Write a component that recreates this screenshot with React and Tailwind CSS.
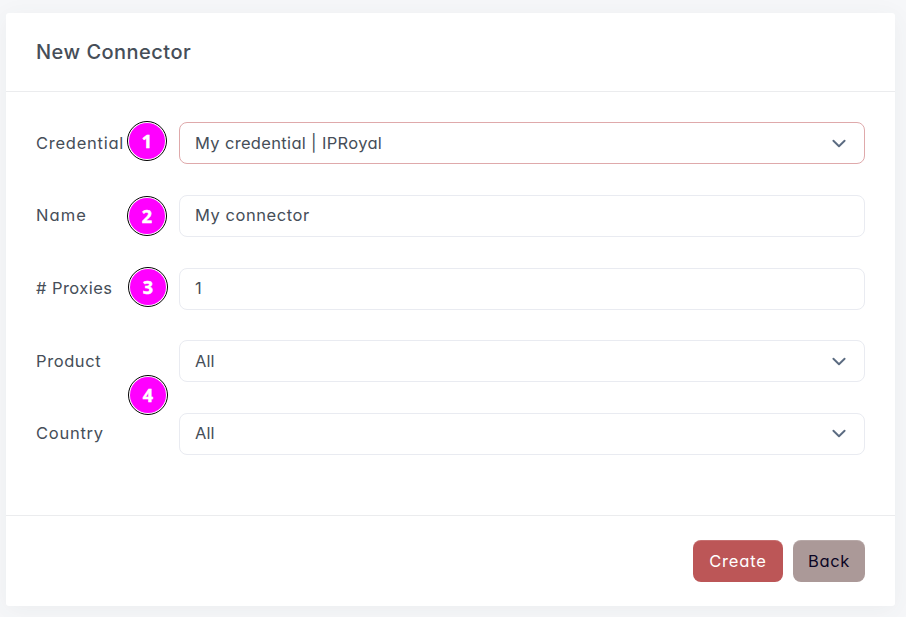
import React from "react";

const fields = [
  { label: "Credential", labelClass: "tracking-[0.75px]", value: "My credential | IPRoyal", valueClass: "tracking-[0.33px]", select: true, active: true },
  { label: "Name", labelClass: "tracking-[1.1px] pb-[1.5px]", value: "My connector", valueClass: "tracking-[0.55px] pb-[1.5px]" },
  { label: "# Proxies", labelClass: "tracking-[0.45px] pb-[1.5px]", value: "1", valueClass: "pb-[1.5px]" },
  { label: "Product", labelClass: "tracking-[0.6px]", value: "All", valueClass: "", select: true },
  { label: "Country", labelClass: "tracking-[0.75px] pb-[1.5px]", value: "All", valueClass: "pb-[1.5px]", select: true, chevronClass: "mb-[1.5px]" },
];

const markers = [
  { n: 1, pos: "left-[127px] top-[121px]" },
  { n: 2, pos: "left-[127px] top-[196px]" },
  { n: 3, pos: "left-[128px] top-[267px]" },
  { n: 4, pos: "left-[128px] top-[375px]" },
];

function Chevron({ className = "" }) {
  return (
    <svg className={className} width="16" height="12" viewBox="0 0 16 12" fill="none" stroke="#5b6b81" strokeWidth="1.9" strokeLinecap="round" strokeLinejoin="round">
      <path d="M2.4 3.7 8 9.2 13.6 3.7" />
    </svg>
  );
}

function Field({ label, labelClass, value, valueClass, select, active, chevronClass }) {
  return (
    <div className="flex h-[42px] items-center">
      <label className={`w-[143px] shrink-0 whitespace-nowrap ${labelClass}`}>{label}</label>
      <div className={`flex h-[42px] flex-1 items-center justify-between rounded-lg border pl-[15px] pr-[17px] ${active ? "border-[#dfa9ab]" : "border-[#e9ebf1]"}`}>
        <span className={`whitespace-nowrap ${valueClass}`}>{value}</span>
        {select && <Chevron className={chevronClass} />}
      </div>
    </div>
  );
}

function Marker({ n, pos }) {
  return (
    <div className={`absolute flex size-[40px] items-center justify-center rounded-full border-[1.5px] border-black bg-white bg-clip-padding p-px ${pos}`}>
      <div className="flex size-full items-center justify-center rounded-full bg-[#ff00ff] font-['Noto_Sans',sans-serif] text-[18px] leading-none font-bold text-white [-webkit-text-stroke:0.5px_white]">{n}</div>
    </div>
  );
}

export default function App() {
  return (
    <div className="relative h-[617px] w-[906px] overflow-hidden bg-[#f6f7f9] px-[6px] pt-[13px] font-[Inter,sans-serif] text-[16.5px] leading-6 font-[380] text-[#464e58] [font-feature-settings:'cv11']">
      <main className="flex h-[593px] w-[889px] flex-col rounded-[3px] bg-white shadow-[0_4px_24px_rgba(70,78,90,0.06)]">
        <header className="flex h-[79px] items-center border-b border-[#ebecee] px-[30px]">
          <h1 className="text-[20px] font-medium tracking-[0.48px]">New Connector</h1>
        </header>
        <section className="flex flex-1 flex-col gap-[30.75px] px-[30px] pt-[30px]">
          {fields.map((f) => <Field key={f.label} {...f} />)}
        </section>
        <footer className="flex h-[91px] items-center justify-end gap-[10px] border-t border-[#ebecee] px-[30px]">
          <button className="h-[42px] w-[90px] rounded-lg bg-[#bc5657] tracking-[0.85px] text-white shadow-[inset_0_1px_0_rgba(255,255,255,0.15)]">Create</button>
          <button className="h-[42px] w-[72px] rounded-lg bg-[#ab9998] tracking-[0.6px] text-[#0b0625] shadow-[inset_0_1px_0_rgba(255,255,255,0.15)]">Back</button>
        </footer>
      </main>
      {markers.map((m) => <Marker key={m.n} {...m} />)}
    </div>
  );
}
